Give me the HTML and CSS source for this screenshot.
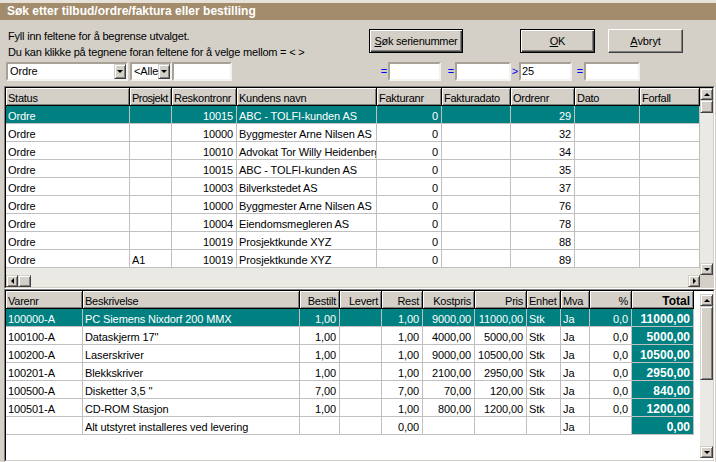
FILE: index.html
```html
<!DOCTYPE html>
<html lang="no">
<head>
<meta charset="utf-8">
<title>Søk etter tilbud/ordre/faktura eller bestilling</title>
<link rel="stylesheet" href="styles.css">
</head>
<body>
<div class="win">
  <div class="titlebar">Søk etter tilbud/ordre/faktura eller bestilling</div>
  <div class="top">
    <div class="intro">
      <p>Fyll inn feltene for å begrense utvalget.</p>
      <p>Du kan klikke på tegnene foran feltene for å velge mellom = &lt; &gt;</p>
    </div>
    <div class="btns">
      <div class="btn def b1"><u>S</u>øk serienummer</div>
      <div class="btn def b2"><u>O</u>K</div>
      <div class="btn b3"><u>A</u>vbryt</div>
    </div>
  </div>
  <div class="filters">
    <div class="combo cb1"><span class="ctext">Ordre</span><span class="dd"><i class="tri-down"></i></span></div>
    <div class="combo cb2"><span class="ctext">&lt;Alle</span><span class="dd"><i class="tri-down"></i></span></div>
    <div class="field f0"></div>
    <span class="op g1">=</span><div class="field f1"></div>
    <span class="op g2">=</span><div class="field f2"></div>
    <span class="op g3">&gt;</span><div class="field f1">25</div>
    <span class="op g4">=</span><div class="field f2"></div>
  </div>

  <div class="grid grid-top">
    <div class="gridin">
      <div class="cells cols-top">
        <span class="c h">Status</span><span class="c h tight">Prosjekt</span><span class="c h">Reskontronr</span><span class="c h">Kundens navn</span><span class="c h">Fakturanr</span><span class="c h">Fakturadato</span><span class="c h">Ordrenr</span><span class="c h">Dato</span><span class="c h">Forfall</span>

        <span class="c sel">Ordre</span><span class="c sel"></span><span class="c sel r">10015</span><span class="c sel">ABC - TOLFI-kunden AS</span><span class="c sel r">0</span><span class="c sel"></span><span class="c sel r">29</span><span class="c sel"></span><span class="c sel"></span>

        <span class="c">Ordre</span><span class="c"></span><span class="c r">10000</span><span class="c">Byggmester Arne Nilsen AS</span><span class="c r">0</span><span class="c"></span><span class="c r">32</span><span class="c"></span><span class="c"></span>

        <span class="c">Ordre</span><span class="c"></span><span class="c r">10010</span><span class="c">Advokat Tor Willy Heidenberg</span><span class="c r">0</span><span class="c"></span><span class="c r">34</span><span class="c"></span><span class="c"></span>

        <span class="c">Ordre</span><span class="c"></span><span class="c r">10015</span><span class="c">ABC - TOLFI-kunden AS</span><span class="c r">0</span><span class="c"></span><span class="c r">35</span><span class="c"></span><span class="c"></span>

        <span class="c">Ordre</span><span class="c"></span><span class="c r">10003</span><span class="c">Bilverkstedet AS</span><span class="c r">0</span><span class="c"></span><span class="c r">37</span><span class="c"></span><span class="c"></span>

        <span class="c">Ordre</span><span class="c"></span><span class="c r">10000</span><span class="c">Byggmester Arne Nilsen AS</span><span class="c r">0</span><span class="c"></span><span class="c r">76</span><span class="c"></span><span class="c"></span>

        <span class="c">Ordre</span><span class="c"></span><span class="c r">10004</span><span class="c">Eiendomsmegleren AS</span><span class="c r">0</span><span class="c"></span><span class="c r">78</span><span class="c"></span><span class="c"></span>

        <span class="c">Ordre</span><span class="c"></span><span class="c r">10019</span><span class="c">Prosjektkunde XYZ</span><span class="c r">0</span><span class="c"></span><span class="c r">88</span><span class="c"></span><span class="c"></span>

        <span class="c">Ordre</span><span class="c">A1</span><span class="c r">10019</span><span class="c">Prosjektkunde XYZ</span><span class="c r">0</span><span class="c"></span><span class="c r">89</span><span class="c"></span><span class="c"></span>
      </div>
      <div class="vscroll">
        <span class="sbtn"><i class="tri-up"></i></span>
        <span class="sbtn thumb t1"></span>
        <span class="track"></span>
        <span class="sbtn"><i class="tri-down"></i></span>
      </div>
      <div class="hscroll">
        <span class="sbtn hb"><i class="tri-left"></i></span>
        <span class="sbtn thumb th"></span>
        <span class="track"></span>
        <span class="sbtn hb"><i class="tri-right"></i></span>
      </div>
      <div class="corner"></div>
    </div>
  </div>

  <div class="grid grid-bottom">
    <div class="gridin">
      <div class="cells cols-bottom">
        <span class="c h">Varenr</span><span class="c h">Beskrivelse</span><span class="c h r">Bestilt</span><span class="c h r">Levert</span><span class="c h r">Rest</span><span class="c h r">Kostpris</span><span class="c h r">Pris</span><span class="c h">Enhet</span><span class="c h">Mva</span><span class="c h r">%</span><span class="c h r b">Total</span>

        <span class="c sel">100000-A</span><span class="c sel">PC Siemens Nixdorf 200 MMX</span><span class="c sel r">1,00</span><span class="c sel"></span><span class="c sel r">1,00</span><span class="c sel r">9000,00</span><span class="c sel r">11000,00</span><span class="c sel">Stk</span><span class="c sel">Ja</span><span class="c sel r">0,0</span><span class="c tot">11000,00</span>

        <span class="c">100100-A</span><span class="c">Dataskjerm 17''</span><span class="c r">1,00</span><span class="c"></span><span class="c r">1,00</span><span class="c r">4000,00</span><span class="c r">5000,00</span><span class="c">Stk</span><span class="c">Ja</span><span class="c r">0,0</span><span class="c tot">5000,00</span>

        <span class="c">100200-A</span><span class="c">Laserskriver</span><span class="c r">1,00</span><span class="c"></span><span class="c r">1,00</span><span class="c r">9000,00</span><span class="c r">10500,00</span><span class="c">Stk</span><span class="c">Ja</span><span class="c r">0,0</span><span class="c tot">10500,00</span>

        <span class="c">100201-A</span><span class="c">Blekkskriver</span><span class="c r">1,00</span><span class="c"></span><span class="c r">1,00</span><span class="c r">2100,00</span><span class="c r">2950,00</span><span class="c">Stk</span><span class="c">Ja</span><span class="c r">0,0</span><span class="c tot">2950,00</span>

        <span class="c">100500-A</span><span class="c">Disketter 3,5 ''</span><span class="c r">7,00</span><span class="c"></span><span class="c r">7,00</span><span class="c r">70,00</span><span class="c r">120,00</span><span class="c">Stk</span><span class="c">Ja</span><span class="c r">0,0</span><span class="c tot">840,00</span>

        <span class="c">100501-A</span><span class="c">CD-ROM Stasjon</span><span class="c r">1,00</span><span class="c"></span><span class="c r">1,00</span><span class="c r">800,00</span><span class="c r">1200,00</span><span class="c">Stk</span><span class="c">Ja</span><span class="c r">0,0</span><span class="c tot">1200,00</span>

        <span class="c"></span><span class="c">Alt utstyret installeres ved levering</span><span class="c"></span><span class="c"></span><span class="c r">0,00</span><span class="c"></span><span class="c"></span><span class="c"></span><span class="c">Ja</span><span class="c"></span><span class="c tot">0,00</span>
      </div>
      <div class="vscroll2">
        <div class="vtrack">
          <span class="sbtn"><i class="tri-up"></i></span>
          <span class="sbtn thumb t2"></span>
          <span class="track"></span>
          <span class="sbtn"><i class="tri-down"></i></span>
        </div>
      </div>
    </div>
  </div>
</div>
</body>
</html>
```

FILE: styles.css
```css
* { box-sizing: border-box; }
html, body { margin: 0; padding: 0; }
body {
  width: 716px;
  height: 462px;
  overflow: hidden;
  background: #d4d0c8;
  color: #000;
  font-family: "Liberation Sans", Arial, sans-serif;
  font-size: 11px;
  letter-spacing: -0.1px;
}
.win {
  width: 716px;
  height: 462px;
  border-top: 3px solid #e6e2da;
  display: flex;
  flex-direction: column;
}
.titlebar {
  height: 17px;
  background: #a38c6c;
  color: #fff;
  font-weight: bold;
  font-size: 12px;
  line-height: 17px;
  padding-left: 7px;
  letter-spacing: 0;
}
.top {
  display: flex;
  height: 42px;
}
.intro {
  width: 369px;
  padding: 8px 0 0 8px;
  line-height: 16px;
  letter-spacing: -0.2px;
}
.intro p { margin: 0; white-space: nowrap; }
.btns {
  display: flex;
  padding-top: 9px;
}
.btn {
  height: 24px;
  display: flex;
  align-items: center;
  justify-content: center;
  background: #d4d0c8;
  border: 1px solid;
  border-color: #fff #404040 #404040 #fff;
  box-shadow: inset -1px -1px #808080;
  white-space: nowrap;
}
.btn.def {
  border: 1px solid #000;
  box-shadow: inset 1px 1px #fff, inset -1px -1px #404040, inset -2px -2px #808080;
}
.btn u { text-decoration: underline; }
.b1 { width: 94px; letter-spacing: -0.25px; }
.b2 { width: 75px; margin-left: 57px; }
.b3 { width: 75px; margin-left: 13px; }

.filters {
  display: flex;
  height: 19px;
  padding-left: 6px;
  margin-bottom: 5px;
}
.combo {
  display: flex;
  background: #fff;
  border: 2px solid;
  border-color: #a8a296 #f4f2ee #f4f2ee #a8a296;
}
.cb1 { width: 122px; margin-right: 2px; }
.cb2 { width: 42px; }
.ctext {
  flex: 1;
  line-height: 15px;
  padding-left: 2px;
  white-space: nowrap;
  overflow: hidden;
}
.dd {
  width: 12px;
  height: 15px;
  display: flex;
  align-items: center;
  justify-content: center;
  background: #d4d0c8;
  border: 1px solid;
  border-color: #d4d0c8 #404040 #404040 #d4d0c8;
  box-shadow: inset 1px 1px #fff, inset -1px -1px #808080;
}
.field {
  height: 19px;
  background: #fff;
  border: 2px solid;
  border-color: #a8a296 #f4f2ee #f4f2ee #a8a296;
  line-height: 15px;
  padding-left: 1px;
}
.f0 { width: 60px; }
.f1 { width: 53px; }
.f2 { width: 56px; }
.op {
  width: 8px;
  color: #0000ff;
  line-height: 19px;
  text-align: center;
}
.g1 { margin-left: 148px; }
.g2 { margin-left: 6px; }
.g3 { margin-left: 0; }
.g4 { margin-left: 4px; }

.grid {
  margin-left: 4px;
  width: 711px;
  border: 1px solid;
  border-color: #808080 #fff #fff #808080;
}
.gridin {
  border: 1px solid;
  border-color: #000 #d4d0c8 #d4d0c8 #000;
  display: grid;
}
.grid-top .gridin {
  grid-template-columns: 694px 13px;
  grid-template-rows: 187px 12px;
}
.grid-bottom .gridin {
  grid-template-columns: 694px 13px;
  grid-template-rows: 169px;
}
.cells {
  display: grid;
  grid-auto-rows: 18px;
  align-content: start;
  overflow: hidden;
}
.cols-top {
  background: #ebe9e4;
  grid-template-columns: 124px 42px 65px 140px 65px 69px 64px 65px 60px;
}
.cols-bottom {
  background: #fff;
  grid-template-columns: 77px 217px 40px 42px 41px 52px 52px 34px 29px 42px 62px;
}
.c {
  background: #fff;
  border-right: 1px solid #c0c0c0;
  border-bottom: 1px solid #c0c0c0;
  padding: 2px 3px 0 2px;
  line-height: 16px;
  white-space: nowrap;
  overflow: hidden;
}
.c.r { text-align: right; }
.c.h {
  background: #d4d0c8;
  border-right: 1px solid #000;
  border-bottom: 1px solid #000;
  box-shadow: inset 1px 1px #fff, inset -1px -1px #808080;
  padding-left: 2px;
  letter-spacing: -0.25px;
}
.c.h.tight { padding: 2px 0 0 2px; letter-spacing: -0.5px; }
.c.h.b { font-weight: bold; font-size: 12px; letter-spacing: 0; }
.c.sel { background: #008080; color: #fff; }
.c.tot {
  background: #008080;
  color: #fff;
  font-weight: bold;
  font-size: 12px;
  letter-spacing: 0;
  text-align: right;
}

.vscroll {
  display: flex;
  flex-direction: column;
  background: #ebe9e4;
}
.vscroll2 {
  background: #fff;
  padding: 3px 0 2px;
}
.vtrack {
  height: 100%;
  display: flex;
  flex-direction: column;
  background: #ebe9e4;
}
.hscroll {
  display: flex;
  background: #ebe9e4;
}
.corner { background: #d4d0c8; }
.track { flex: 1; }
.sbtn {
  width: 13px;
  height: 12px;
  flex: none;
  display: flex;
  align-items: center;
  justify-content: center;
  background: #d4d0c8;
  border: 1px solid;
  border-color: #d4d0c8 #404040 #404040 #d4d0c8;
  box-shadow: inset 1px 1px #fff, inset -1px -1px #808080;
}
.hb { width: 12px; }
.t1 { height: 13px; }
.t2 { height: 74px; }
.th { width: 13px; }

.tri-up, .tri-down, .tri-left, .tri-right {
  display: block;
  width: 0;
  height: 0;
  border: 0 solid transparent;
}
.tri-up { border-width: 0 3px 3px; border-bottom-color: #000; }
.tri-down { border-width: 3px 3px 0; border-top-color: #000; }
.tri-left { border-width: 3px 3px 3px 0; border-right-color: #000; }
.tri-right { border-width: 3px 0 3px 3px; border-left-color: #000; }
```
